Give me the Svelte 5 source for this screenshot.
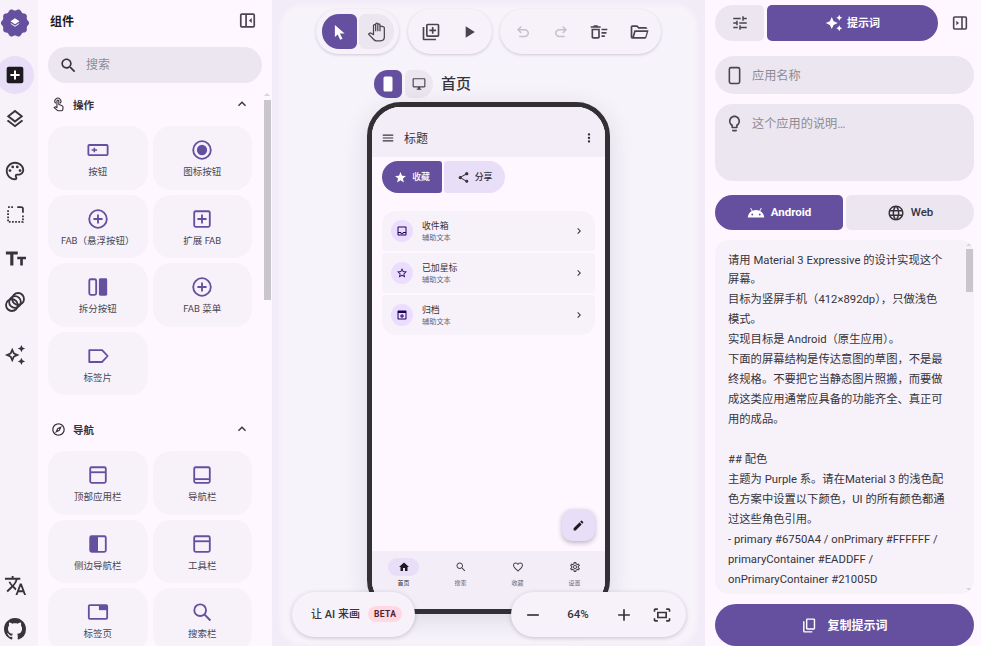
<script>
  // material paths used more than once or too long to keep in the markup
  const P = {
    search: 'M15.5 14h-.79l-.28-.27C15.41 12.59 16 11.11 16 9.5 16 5.91 13.09 3 9.5 3S3 5.91 3 9.5 5.91 16 9.5 16c1.61 0 3.09-.59 4.23-1.57l.27.28v.79l5 4.99L20.49 19l-4.99-5zm-6 0C7.01 14 5 11.99 5 9.5S7.01 5 9.5 5 14 7.01 14 9.5 11.99 14 9.5 14z',
    less: 'M12 8l-6 6 1.41 1.41L12 10.83l4.59 4.58L18 14z',
    chevron: 'M10 6L8.59 7.41 13.17 12l-4.58 4.59L10 18l6-6z',
    layers: 'M11.99 18.54l-7.37-5.73L3 14.07l9 7 9-7-1.63-1.27-7.38 5.74zM12 16l7.36-5.73L21 9l-9-7-9 7 1.63 1.27L12 16zm0-11.47L17.74 9 12 13.47 6.26 9 12 4.53z',
    sparkOutline: 'M19 9l1.25-2.75L23 5l-2.75-1.25L19 1l-1.25 2.75L15 5l2.75 1.25L19 9zm-7.5.5L9 4 6.5 9.5 1 12l5.5 2.5L9 20l2.5-5.5L17 12l-5.5-2.5zM9.99 12.99L9 15.17l-.99-2.18L5.83 12l2.18-.99L9 8.83l.99 2.18 2.18.99-2.18.99zM19 15l-1.25 2.75L15 19l2.75 1.25L19 23l1.25-2.75L23 19l-2.75-1.25L19 15z',
    spark: 'M19 9l1.25-2.75L23 5l-2.75-1.25L19 1l-1.25 2.75L15 5l2.75 1.25zM19 15l-1.25 2.75L15 19l2.75 1.25L19 23l1.25-2.75L23 19l-2.75-1.25zM11.5 9.5L9 4 6.5 9.5 1 12l5.5 2.5L9 20l2.5-5.5L17 12l-5.5-2.5z',
    translate: 'M12.87 15.07l-2.54-2.51.03-.03c1.74-1.94 2.98-4.17 3.71-6.53H17V4h-7V2H8v2H1v1.99h11.17C11.5 7.92 10.44 9.75 9 11.35 8.07 10.32 7.3 9.19 6.69 8h-2c.73 1.63 1.73 3.17 2.98 4.56l-5.09 5.02L4 19l5-5 3.11 3.11.76-2.04zM18.5 10h-2L12 22h2l1.12-3h4.75L21 22h2l-4.5-12zm-2.62 7l1.62-4.33L19.12 17h-3.24z',
    palette: 'M12 22C6.49 22 2 17.51 2 12S6.49 2 12 2s10 4.04 10 9c0 3.31-2.69 6-6 6h-1.77c-.28 0-.5.22-.5.5 0 .12.05.23.13.33.41.47.64 1.06.64 1.67A2.5 2.5 0 0 1 12 22zm0-18c-4.41 0-8 3.59-8 8s3.59 8 8 8c.28 0 .5-.22.5-.5a.54.54 0 0 0-.14-.35c-.41-.46-.63-1.05-.63-1.65a2.5 2.5 0 0 1 2.5-2.5H16c2.21 0 4-1.79 4-4 0-3.86-3.59-7-8-7z',
    undo: 'M7 19v-2h7.1q1.57 0 2.73-1T18 13.5q0-1.5-1.17-2.5T14.1 10H7.8l2.6 2.6L9 14 4 9l5-5 1.4 1.4L7.8 8h6.3q2.43 0 4.16 1.57T20 13.5q0 2.36-1.74 3.93T14.1 19H7z',
    home: 'M10 20v-6h4v6h5v-8h3L12 3 2 12h3v8z',
    heart: 'M16.5 3c-1.74 0-3.41.81-4.5 2.09C10.91 3.81 9.24 3 7.5 3 4.42 3 2 5.42 2 8.5c0 3.78 3.4 6.86 8.55 11.54L12 21.35l1.45-1.32C18.6 15.36 22 12.28 22 8.5 22 5.42 19.58 3 16.5 3zm-4.4 15.55l-.1.1-.1-.1C7.14 14.24 4 11.39 4 8.5 4 6.5 5.5 5 7.5 5c1.54 0 3.04.99 3.57 2.36h1.87C13.46 5.99 14.96 5 16.5 5c2 0 3.5 1.5 3.5 3.5 0 2.89-3.14 5.74-7.9 10.05z',
    gear: 'M19.43 12.98c.04-.32.07-.64.07-.98 0-.34-.03-.66-.07-.98l2.11-1.65c.19-.15.24-.42.12-.64l-2-3.46c-.09-.16-.26-.25-.44-.25-.06 0-.12.01-.17.03l-2.49 1c-.52-.4-1.08-.73-1.69-.98l-.38-2.65C14.46 2.18 14.25 2 14 2h-4c-.25 0-.46.18-.49.42l-.38 2.65c-.61.25-1.17.59-1.69.98l-2.49-1c-.06-.02-.12-.03-.18-.03-.17 0-.34.09-.43.25l-2 3.46c-.13.22-.07.49.12.64l2.11 1.65c-.04.32-.07.65-.07.98 0 .33.03.66.07.98l-2.11 1.65c-.19.15-.24.42-.12.64l2 3.46c.09.16.26.25.44.25.06 0 .12-.01.17-.03l2.49-1c.52.4 1.08.73 1.69.98l.38 2.65c.03.24.24.42.49.42h4c.25 0 .46-.18.49-.42l.38-2.65c.61-.25 1.17-.59 1.69-.98l2.49 1c.06.02.12.03.18.03.17 0 .34-.09.43-.25l2-3.46c.12-.22.07-.49-.12-.64l-2.11-1.65zm-1.98-1.71c.04.31.05.52.05.73 0 .21-.02.43-.05.73l-.14 1.13.89.7 1.08.84-.7 1.21-1.27-.51-1.04-.42-.9.68c-.43.32-.84.56-1.25.73l-1.06.43-.16 1.13-.2 1.35h-1.4l-.19-1.35-.16-1.13-1.06-.43c-.43-.18-.83-.41-1.23-.71l-.91-.7-1.06.43-1.27.51-.7-1.21 1.08-.84.89-.7-.14-1.13c-.03-.31-.05-.54-.05-.74s.02-.43.05-.73l.14-1.13-.89-.7-1.08-.84.7-1.21 1.27.51 1.04.42.9-.68c.43-.32.84-.56 1.25-.73l1.06-.43.16-1.13.2-1.35h1.39l.19 1.35.16 1.13 1.06.43c.43.18.83.41 1.23.71l.91.7 1.06-.43 1.27-.51.7 1.21-1.07.85-.89.7.14 1.13zM12 8c-2.21 0-4 1.79-4 4s1.79 4 4 4 4-1.79 4-4-1.79-4-4-4zm0 6c-1.1 0-2-.9-2-2s.9-2 2-2 2 .9 2 2-.9 2-2 2z',
    inbox: 'M19 3H5c-1.1 0-2 .9-2 2v14c0 1.1.9 2 2 2h14c1.1 0 2-.9 2-2V5c0-1.1-.9-2-2-2zm0 16H5v-3h3.56c.69 1.19 1.97 2 3.45 2s2.75-.81 3.45-2H19v3zm0-5h-4.99c0 1.1-.9 2-2 2s-2-.9-2-2H5V5h14v9z',
    starLine: 'M22 9.24l-7.19-.62L12 2 9.19 8.63 2 9.24l5.46 4.73L5.82 21 12 17.27 18.18 21l-1.63-7.03L22 9.24zM12 15.4l-3.76 2.27 1-4.28-3.32-2.88 4.38-.38L12 6.1l1.71 4.04 4.38.38-3.32 2.88 1 4.28L12 15.4z',
    archive: 'M5 3h14c1.1 0 2 .9 2 2v14c0 1.1-.9 2-2 2H5c-1.1 0-2-.9-2-2V5c0-1.1.9-2 2-2zm0 5v11h14V8H5zm6 2h2v3h3v2h-3v3h-2v-3H8v-2h3z'
  };

  // card glyphs, all on a 24 box, stroke colour comes from .glyph
  const ring = '<circle cx="12" cy="12" r="9.6" fill="none" stroke-width="2"/>';
  const plus = '<path d="M12 7v10M7 12h10" fill="none" stroke-width="2"/>';
  const box = '<rect x="3.5" y="3.5" width="17" height="17" rx="1.6" fill="none" stroke-width="2"/>';
  const G = {
    button: '<rect x="1.5" y="6.5" width="21" height="11" rx="1" fill="none" stroke-width="2"/><path d="M5 12h6M8 9.5v5" fill="none" stroke-width="1.7"/>',
    iconbtn: ring + '<circle cx="12" cy="12" r="5.6" fill="currentColor" stroke="none"/>',
    fab: ring + plus,
    extfab: box + plus,
    split: '<rect x="2.5" y="3.5" width="7.5" height="17" rx="1.6" fill="none" stroke-width="2"/><rect x="13" y="2.5" width="9" height="19" rx="1.6" fill="currentColor" stroke="none"/>',
    chip: '<path d="M2.5 5.5h14l6 6.5-6 6.5h-14z" fill="none" stroke-width="2" stroke-linejoin="round"/>',
    topbar: box + '<path d="M3.5 9h17" fill="none" stroke-width="2"/>',
    navbar: box + '<path d="M3.5 16.5h17" fill="none" stroke-width="2"/>',
    rail: box + '<rect x="3.5" y="3.5" width="8.5" height="17" fill="currentColor" stroke="none"/>',
    tabs: '<rect x="2" y="4.5" width="20" height="15" rx="1.2" fill="none" stroke-width="2"/><rect x="13" y="4.5" width="9" height="5.5" fill="currentColor" stroke="none"/>',
    searchbar: '<circle cx="10" cy="10" r="6.4" fill="none" stroke-width="2"/><path d="M14.6 14.6l6.6 6.6" fill="none" stroke-width="2.2"/>'
  };

  const sections = [
    {
      title: '操作',
      icon: 'touch',
      items: [
        ['按钮', 'button'], ['图标按钮', 'iconbtn'], ['FAB（悬浮按钮）', 'fab'], ['扩展 FAB', 'extfab'],
        ['拆分按钮', 'split'], ['FAB 菜单', 'fab'], ['标签片', 'chip']
      ]
    },
    {
      title: '导航',
      icon: 'explore',
      items: [
        ['顶部应用栏', 'topbar'], ['导航栏', 'navbar'], ['侧边导航栏', 'rail'], ['工具栏', 'topbar'],
        ['标签页', 'tabs'], ['搜索栏', 'searchbar']
      ]
    }
  ];

  const listRows = [
    { title: '收件箱', icon: P.inbox },
    { title: '已加星标', icon: P.starLine },
    { title: '归档', icon: P.archive }
  ];

  const navItems = [
    { label: '首页', icon: P.home, active: true },
    { label: '搜索', icon: P.search },
    { label: '收藏', icon: P.heart },
    { label: '设置', icon: P.gear }
  ];

  // scalloped logo blob
  const blob = Array.from({ length: 120 }, (_, i) => {
    const a = (i / 120) * Math.PI * 2;
    const r = 13.3 + 0.8 * Math.cos(a * 10);
    return `${(15 + r * Math.cos(a)).toFixed(2)},${(15 + r * Math.sin(a)).toFixed(2)}`;
  }).join(' ');

  const promptText = `请用 Material 3 Expressive 的设计实现这个屏幕。
目标为竖屏手机（412×892dp），只做浅色模式。
实现目标是 Android（原生应用）。
下面的屏幕结构是传达意图的草图，不是最终规格。不要把它当静态图片照搬，而要做成这类应用通常应具备的功能齐全、真正可用的成品。

## 配色
主题为 Purple 系。请在Material 3 的浅色配色方案中设置以下颜色，UI 的所有颜色都通过这些角色引用。
- primary #6750A4 / onPrimary #FFFFFF / primaryContainer #EADDFF / onPrimaryContainer #21005D`;
</script>

{#snippet icon(d, size = 20, cls = '')}
  <svg class={cls} width={size} height={size} viewBox="0 0 24 24" fill="currentColor" aria-hidden="true"><path {d} /></svg>
{/snippet}

<div class="app">
  <nav class="rail">
    <svg class="logo" width="30" height="30" viewBox="0 0 30 30">
      <polygon points={blob} fill="#65509f" />
      <path d="M15 10.200l4.500 3-4.500 3-4.500-3zM11.200 15.200l3.800 2.500 3.800-2.500.7.6-4.500 3-4.500-3z" fill="#fff" />
    </svg>
    <div class="rail-active">
      <svg width="20" height="20" viewBox="0 0 24 24">
        <rect x="2" y="2" width="20" height="20" rx="2.5" fill="#1d1b20" />
        <path d="M12 6.5v11M6.5 12h11" stroke="#fff" stroke-width="2.4" />
      </svg>
    </div>
    <div class="rail-item first">{@render icon(P.layers, 22)}</div>
    <div class="rail-item palette">
      <svg width="22" height="22" viewBox="0 0 24 24" fill="currentColor">
        <path d={P.palette} />
        <circle cx="6.5" cy="11.5" r="1.5" /><circle cx="9.5" cy="7.5" r="1.5" /><circle cx="14.5" cy="7.5" r="1.5" /><circle cx="17.5" cy="11.5" r="1.5" />
      </svg>
    </div>
    <div class="rail-item dashed">
      <svg width="21" height="21" viewBox="0 0 24 24" fill="none" stroke="currentColor" stroke-width="2">
        <path d="M14 3.500h4.500a2 2 0 0 1 2 2V10" />
        <path d="M3.500 3.500h7M3.500 7v13.500h17V13" stroke-dasharray="2 1.600" />
      </svg>
    </div>
    <div class="rail-item">{@render icon('M1 4v3.400h5V20h3.600V7.400h5V4zM14 10v2.800h3.400V20h3v-7.200H24V10z', 21)}</div>
    <div class="rail-item">
      <svg width="22" height="22" viewBox="0 0 24 24" fill="none" stroke="currentColor" stroke-width="2">
        <circle cx="8.600" cy="15.400" r="6.400" /><circle cx="12" cy="12" r="6.400" /><circle cx="15.400" cy="8.600" r="6.400" />
      </svg>
    </div>
    <div class="rail-item spark">{@render icon(P.sparkOutline, 22)}</div>
    <div class="rail-foot">
      {@render icon(P.translate, 23)}
      <svg class="gh" width="22" height="22" viewBox="0 0 16 16" fill="currentColor"><path d="M8 0C3.58 0 0 3.58 0 8c0 3.54 2.29 6.53 5.47 7.59.4.07.55-.17.55-.38 0-.19-.01-.82-.01-1.49-2.01.37-2.53-.49-2.69-.94-.09-.23-.48-.94-.82-1.13-.28-.15-.68-.52-.01-.53.63-.01 1.08.58 1.23.82.72 1.21 1.87.87 2.33.66.07-.52.28-.87.51-1.07-1.78-.2-3.64-.89-3.64-3.95 0-.87.31-1.59.82-2.15-.08-.2-.36-1.02.08-2.12 0 0 .67-.21 2.2.82.64-.18 1.32-.27 2-.27.68 0 1.36.09 2 .27 1.53-1.04 2.2-.82 2.2-.82.44 1.1.16 1.92.08 2.12.51.56.82 1.27.82 2.15 0 3.07-1.87 3.75-3.65 3.95.29.25.54.73.54 1.48 0 1.07-.01 1.93-.01 2.2 0 .21.15.46.55.38A8.013 8.013 0 0016 8c0-4.42-3.58-8-8-8z" /></svg>
    </div>
  </nav>

  <aside class="panel">
    <header class="panel-head">
      <h2>组件</h2>
      <svg width="17" height="17" viewBox="0 0 24 24" fill="none" stroke="#49454f" stroke-width="2.4">
        <rect x="2.5" y="3" width="19" height="18" rx="1.5" /><path d="M10 3v18" />
        <path d="M18 8.5v7L14 12z" fill="#49454f" stroke="none" />
      </svg>
    </header>
    <div class="search">
      {@render icon(P.search, 19)}
      <span>搜索</span>
    </div>
    <div class="list">
      {#each sections as s}
        <section>
          <div class="sec-head">
            {#if s.icon === 'touch'}
              <svg width="15" height="15" viewBox="0 0 24 24" fill="none" stroke="currentColor" stroke-width="1.800" stroke-linejoin="round">
                <path d="M9.500 17V6.500a1.500 1.500 0 0 1 3 0V12l4.500 1.500c1.500.5 2.500 1.500 2.300 3l-.6 4c-.2 1-1 1.500-2 1.500h-5c-.8 0-1.400-.3-2-.9L5 17l.8-.8c.5-.5 1.200-.6 1.800-.3z" />
                <path d="M7.500 10a4.800 4.800 0 1 1 7 0" />
              </svg>
            {:else}
              {@render icon('M12 2C6.48 2 2 6.48 2 12s4.48 10 10 10 10-4.48 10-10S17.520 2 12 2zm0 18c-4.410 0-8-3.590-8-8s3.590-8 8-8 8 3.590 8 8-3.590 8-8 8zm-5.500-2.500l7.510-3.490L17.500 6.500 9.990 9.990 6.500 17.500zm5.500-6.600c.61 0 1.100.49 1.100 1.100s-.49 1.100-1.100 1.100-1.100-.49-1.100-1.100.49-1.100 1.100-1.100z', 15)}
            {/if}
            <span>{s.title}</span>
            {@render icon(P.less, 16, 'sec-toggle')}
          </div>
          <div class="cards">
            {#each s.items as [label, g]}
              <div class="card">
                <svg class="glyph" width="22" height="22" viewBox="0 0 24 24" stroke="currentColor">{@html G[g]}</svg>
                <span>{label}</span>
              </div>
            {/each}
          </div>
        </section>
      {/each}
    </div>
    <div class="scroll-up"></div>
    <div class="thumb"></div>
  </aside>

  <main class="canvas">
    <div class="toolbar">
      <div class="tool-group">
        <div class="seg on">
          <svg width="18" height="18" viewBox="0 0 24 24" fill="#fff"><path d="M6.500 2.500l13 11.500h-6.300l3.400 7-3 1.400-3.300-7.200-3.800 3.600z" /></svg>
        </div>
        <div class="seg off">
          <svg width="20" height="20" viewBox="0 0 24 24" fill="none" stroke="#49454f" stroke-width="1.500" stroke-linejoin="round"><path d="M22 6.500V18c0 2.800-2 4.500-4.500 4.500h-5.200c-1 0-2-.4-2.700-1.200L3 14.600l1.200-1.100c.4-.4 1-.4 1.500-.2L9 15.200V4.500c0-.8.6-1.400 1.300-1.400s1.300.6 1.300 1.400V11m0 0V2.600c0-.8.6-1.400 1.300-1.400s1.300.6 1.300 1.400V11m0 0V3.600c0-.8.6-1.400 1.300-1.400s1.300.6 1.300 1.400V11m0 0V6.400c0-.8.6-1.400 1.300-1.400S22 5.700 22 6.500" /></svg>
        </div>
      </div>
      <div class="tool-group wide">
        {@render icon('M4 6H2v14c0 1.1.9 2 2 2h14v-2H4V6zm16-4H8c-1.1 0-2 .9-2 2v12c0 1.100.9 2 2 2h12c1.100 0 2-.9 2-2V4c0-1.100-.9-2-2-2zm0 14H8V4h12v12zm-7-2h2v-3h3V9h-3V6h-2v3h-3v2h3z', 20)}
        {@render icon('M8 5v14l11-7z', 20)}
      </div>
      <div class="tool-group tail">
        {@render icon(P.undo, 18, 'dim')}
        {@render icon(P.undo, 18, 'dim flip')}
        {@render icon('M15 16h4v2h-4zm0-8h7v2h-7zm0 4h6v2h-6zM3 18c0 1.100.9 2 2 2h6c1.100 0 2-.9 2-2V8H3v10zm2-8h6v8H5v-8zm5-6H6L5 5H2v2h12V5h-3z', 20)}
        {@render icon('M4 20q-.82 0-1.41-.59T2 18V6q0-.82.59-1.41T4 4h6l2 2h8q.82 0 1.41.59T22 8H11.17l-2-2H4v12l2.4-8h17.1l-2.58 8.6q-.2.65-.74 1.03T19.5 20H4zm2.1-2h13.4l1.8-6H7.9l-1.8 6z', 20)}
      </div>
    </div>

    <div class="device-row">
      <div class="dev on">
        <svg width="14" height="16" viewBox="0 0 14 16" fill="#fff"><rect x="2.500" y="0.500" width="9" height="15" rx="1.500" /></svg>
      </div>
      <div class="dev off">
        {@render icon('M21 2H3c-1.100 0-2 .9-2 2v12c0 1.100.9 2 2 2h7v2H8v2h8v-2h-2v-2h7c1.100 0 2-.9 2-2V4c0-1.100-.9-2-2-2zm0 14H3V4h18v12z', 14)}
      </div>
      <h1>首页</h1>
    </div>

    <div class="phone">
      <div class="screen">
        <div class="appbar">
          {@render icon('M3 18h18v-2H3v2zm0-5h18v-2H3v2zm0-7v2h18V6H3z', 14)}
          <span>标题</span>
          {@render icon('M12 8c1.100 0 2-.9 2-2s-.9-2-2-2-2 .9-2 2 .9 2 2 2zm0 2c-1.100 0-2 .9-2 2s.9 2 2 2 2-.9 2-2-.9-2-2-2zm0 6c-1.100 0-2 .9-2 2s.9 2 2 2 2-.9 2-2-.9-2-2-2z', 14, 'appbar-more')}
        </div>
        <div class="btn-group">
          <div class="gbtn first">
            {@render icon('M12 17.270L18.180 21l-1.640-7.030L22 9.240l-7.190-.61L12 2 9.190 8.630 2 9.240l5.460 4.730L5.820 21z', 13)}
            <span>收藏</span>
          </div>
          <div class="gbtn second">
            {@render icon('M18 16.080c-.76 0-1.440.3-1.960.77L8.910 12.700c.05-.23.090-.46.090-.7s-.04-.47-.09-.7l7.050-4.110c.54.5 1.250.81 2.040.81 1.660 0 3-1.340 3-3s-1.340-3-3-3-3 1.340-3 3c0 .24.040.47.090.7L8.040 9.810C7.500 9.310 6.790 9 6 9c-1.660 0-3 1.340-3 3s1.340 3 3 3c.79 0 1.500-.31 2.040-.81l7.120 4.160c-.05.21-.08.43-.08.65 0 1.610 1.310 2.920 2.920 2.920s2.920-1.310 2.920-2.920-1.310-2.920-2.920-2.920z', 13)}
            <span>分享</span>
          </div>
        </div>
        <div class="rows">
          {#each listRows as r}
            <div class="row">
              <div class="avatar">{@render icon(r.icon, 12)}</div>
              <div class="row-text">
                <span class="row-title">{r.title}</span>
                <span class="row-sub">辅助文本</span>
              </div>
              {@render icon(P.chevron, 12, 'row-go')}
            </div>
          {/each}
        </div>
        <div class="fab">
          {@render icon('M3 17.250V21h3.750L17.810 9.940l-3.750-3.750L3 17.250zM20.710 7.040c.39-.39.39-1.020 0-1.410l-2.340-2.340c-.39-.39-1.020-.39-1.410 0l-1.830 1.830 3.750 3.750 1.830-1.830z', 13)}
        </div>
        <div class="bottom-nav">
          {#each navItems as n}
            <div class="nav-item" class:active={n.active}>
              <div class="nav-pill">{@render icon(n.icon, 12)}</div>
              <span>{n.label}</span>
            </div>
          {/each}
        </div>
      </div>
    </div>

    <div class="float ai">
      <span>让 AI 来画</span>
      <em>BETA</em>
    </div>
    <div class="float zoom">
      {@render icon('M19 13H5v-2h14v2z', 20)}
      <span class="pct">64%</span>
      {@render icon('M19 13h-6v6h-2v-6H5v-2h6V5h2v6h6v2z', 20)}
      <span class="fit">{@render icon('M17 4h3c1.100 0 2 .9 2 2v2h-2V6h-3V4zM4 8V6h3V4H4c-1.100 0-2 .9-2 2v2h2zm16 8v2h-3v2h3c1.100 0 2-.9 2-2v-2h-2zM7 18H4v-2H2v2c0 1.100.9 2 2 2h3v-2zM18 8H6v8h12V8zm-2 6H8v-4h8v4z', 20)}</span>
    </div>
  </main>

  <aside class="side">
    <div class="tabs">
      <div class="tab plain">{@render icon('M3 17v2h6v-2H3zM3 5v2h10V5H3zm10 16v-2h8v-2h-8v-2h-2v6h2zM7 9v2H3v2h4v2h2V9H7zm14 4v-2H11v2h10zm-6-4h2V7h4V5h-4V3h-2v6z', 18)}</div>
      <div class="tab main">{@render icon(P.spark, 18)}<span>提示词</span></div>
      <svg class="side-toggle" width="16" height="16" viewBox="0 0 24 24" fill="none" stroke="#49454f" stroke-width="2.400">
        <rect x="2.500" y="3" width="19" height="18" rx="1.500" /><path d="M15 3v18" />
        <path d="M6.500 8.500v7l4-3.500z" fill="#49454f" stroke="none" />
      </svg>
    </div>

    <div class="field">
      <svg width="19" height="19" viewBox="0 0 24 24" fill="none" stroke="#49454f" stroke-width="2"><rect x="5.500" y="2" width="13" height="20" rx="2" /></svg>
      <span>应用名称</span>
    </div>
    <div class="field area">
      {@render icon('M9 21c0 .55.45 1 1 1h4c.55 0 1-.45 1-1v-1H9v1zm3-19C8.140 2 5 5.140 5 9c0 2.380 1.190 4.470 3 5.740V17c0 .55.45 1 1 1h6c.55 0 1-.45 1-1v-2.260c1.810-1.270 3-3.360 3-5.740 0-3.860-3.140-7-7-7zm2.850 11.100l-.85.6V16h-4v-2.300l-.85-.6C7.800 12.160 7 10.630 7 9c0-2.760 2.240-5 5-5s5 2.240 5 5c0 1.630-.8 3.160-2.150 4.100z', 19)}
      <span>这个应用的说明…</span>
    </div>

    <div class="platform">
      <div class="pf on">
        {@render icon('M17.600 9.480l1.840-3.180c.16-.31.040-.69-.26-.85a.637.637 0 0 0-.83.22l-1.880 3.240a11.463 11.463 0 0 0-8.940 0L5.650 5.670a.643.643 0 0 0-.87-.2c-.28.18-.37.54-.22.83L6.400 9.480A10.780 10.780 0 0 0 1 18h22a10.780 10.780 0 0 0-5.400-8.520zM7 15.250a1.250 1.250 0 1 1 0-2.500 1.250 1.250 0 0 1 0 2.500zm10 0a1.250 1.250 0 1 1 0-2.500 1.250 1.250 0 0 1 0 2.500z', 18)}
        <span>Android</span>
      </div>
      <div class="pf off">
        {@render icon('M11.990 2C6.470 2 2 6.480 2 12s4.470 10 9.990 10C17.520 22 22 17.520 22 12S17.520 2 11.990 2zm6.930 6h-2.950c-.32-1.250-.78-2.450-1.380-3.560 1.840.63 3.370 1.910 4.330 3.560zM12 4.040c.83 1.200 1.480 2.530 1.910 3.960h-3.820c.43-1.430 1.080-2.760 1.910-3.960zM4.260 14C4.100 13.360 4 12.690 4 12s.1-1.360.26-2h3.380c-.08.66-.14 1.320-.14 2 0 .68.06 1.340.14 2H4.260zm.82 2h2.950c.32 1.250.78 2.450 1.380 3.560-1.840-.63-3.370-1.900-4.330-3.560zm2.950-8H5.080c.96-1.660 2.490-2.930 4.330-3.560C8.810 5.550 8.350 6.750 8.030 8zM12 19.960c-.83-1.200-1.480-2.530-1.910-3.960h3.820c-.43 1.430-1.080 2.760-1.910 3.960zM14.340 14H9.660c-.09-.66-.16-1.320-.16-2 0-.68.07-1.350.16-2h4.680c.09.65.16 1.320.16 2 0 .68-.07 1.340-.16 2zm.25 5.560c.6-1.110 1.060-2.310 1.380-3.560h2.950c-.96 1.650-2.490 2.930-4.330 3.560zM16.360 14c.08-.66.14-1.320.14-2 0-.68-.06-1.340-.14-2h3.380c.16.64.26 1.310.26 2s-.1 1.360-.26 2h-3.380z', 18)}
        <span>Web</span>
      </div>
    </div>

    <div class="prompt">
      <p>{promptText}</p>
      <div class="arrow up"></div>
      <div class="prompt-thumb"></div>
      <div class="arrow down"></div>
    </div>

    <div class="copy">
      {@render icon('M9 18q-.82 0-1.410-.59T7 16V4q0-.82.59-1.410T9 2h9q.82 0 1.410.59T20 4v12q0 .82-.59 1.410T18 18H9zm0-2h9V4H9v12zm-4 6q-.82 0-1.410-.59T3 20V6h2v14h11v2H5z', 17)}
      <span>复制提示词</span>
    </div>
  </aside>
</div>

<style>
  :global(body) {
    margin: 0;
    background: #fef7ff;
  }

  .app {
    display: grid;
    grid-template-columns: 38px 234px 433px 276px;
    width: 981px;
    height: 646px;
    overflow: hidden;
    color: #1d1b20;
    font-family: Roboto, 'Noto Sans CJK SC', sans-serif;
  }

  svg {
    display: block;
    flex: none;
  }

  /* rail */
  .rail {
    display: flex;
    flex-direction: column;
    align-items: center;
    background: #f7f2fa;
    position: relative;
    overflow: hidden;
    color: #36333b;
    padding-right: 8px;
    box-sizing: border-box;
  }
  .logo {
    margin: 8px 0 18px 0;
  }
  .rail-active {
    width: 38px;
    height: 38px;
    flex: none;
    border-radius: 50%;
    background: #e8def8;
    display: flex;
    align-items: center;
    justify-content: center;
  }
  .rail-item {
    height: 22px;
    margin-top: 22px;
    display: flex;
    align-items: center;
  }
  .rail-item.first {
    margin-top: 14px;
  }
  .rail-item.palette {
    margin-top: 30px;
  }
  .rail-item.dashed {
    margin-top: 21px;
  }
  .rail-item.spark {
    margin-top: 31px;
  }
  .rail-foot {
    margin-top: auto;
    display: flex;
    flex-direction: column;
    align-items: center;
    gap: 21px;
    padding-bottom: 6px;
  }

  /* component panel */
  .panel {
    position: relative;
    display: flex;
    flex-direction: column;
    padding: 0 10px;
    overflow: hidden;
    height: 646px;
    box-sizing: border-box;
  }
  .panel-head {
    display: flex;
    justify-content: space-between;
    align-items: center;
    height: 40px;
    padding: 0 6px 0 2px;
    flex: none;
  }
  .panel-head h2 {
    margin: 0;
    font-size: 12px;
    font-weight: 700;
  }
  .search {
    display: flex;
    align-items: center;
    gap: 8px;
    height: 36px;
    width: 214px;
    margin-top: 7px;
    padding-left: 11px;
    box-sizing: border-box;
    flex: none;
    border-radius: 18px;
    background: #ece6f0;
    color: #36333b;
  }
  .search span {
    font-size: 12px;
    line-height: 14px;
    margin-top: -1px;
    color: #8f8b95;
  }
  .list {
    width: 204px;
    margin-top: 9px;
  }
  section {
    margin-bottom: 22px;
  }
  .sec-head {
    display: flex;
    align-items: center;
    gap: 7px;
    height: 24px;
    padding: 0 2px 0 3px;
    font-size: 10.500px;
    font-weight: 600;
    color: #36333b;
    margin-bottom: 10px;
  }
  .sec-head :global(.sec-toggle) {
    margin-left: auto;
  }
  .cards {
    display: grid;
    grid-template-columns: 1fr 1fr;
    grid-auto-rows: 63.500px;
    gap: 5px;
  }
  .card {
    display: flex;
    flex-direction: column;
    align-items: center;
    gap: 3px;
    padding-top: 13px;
    box-sizing: border-box;
    background: #f7f2fa;
    border-radius: 18px;
    font-size: 9.500px;
    color: #49454f;
  }
  .glyph {
    color: #65509f;
  }
  .scroll-up {
    position: absolute;
    left: 226px;
    top: 93px;
    width: 0;
    height: 0;
    border-left: 3px solid transparent;
    border-right: 3px solid transparent;
    border-bottom: 3px solid #d9d5dc;
  }
  .thumb {
    position: absolute;
    left: 226px;
    top: 100px;
    width: 7px;
    height: 200px;
    background: #c9c5cd;
  }

  /* canvas: darker frame, softly edged lighter sheet on top */
  .canvas {
    position: relative;
    background: #f2ecf8;
    display: flex;
    flex-direction: column;
    height: 646px;
    overflow: hidden;
  }
  .canvas::before {
    content: '';
    position: absolute;
    inset: 5px 8px 1px;
    background: #f7f3fa;
    border-radius: 22px;
    filter: blur(2px);
  }
  .canvas > * {
    position: relative;
  }
  .toolbar {
    display: flex;
    gap: 8.500px;
    margin: 9px 0 0 44px;
    flex: none;
  }
  .tool-group {
    display: flex;
    align-items: center;
    justify-content: center;
    width: 83px;
    height: 45px;
    box-sizing: border-box;
    background: #f7f2fa;
    border-radius: 23px;
    box-shadow: 0 1px 3px rgba(60, 50, 80, 0.22);
    color: #49454f;
    gap: 2px;
  }
  .tool-group.wide {
    width: 84px;
    padding: 0 13px;
    justify-content: space-between;
  }
  .tool-group.tail {
    width: 161px;
    padding: 0 12px 0 14px;
    justify-content: space-between;
  }
  .tool-group :global(.dim) {
    color: #c5c1cb;
  }
  .tool-group :global(.flip) {
    transform: scaleX(-1);
  }
  .seg {
    width: 35px;
    height: 35px;
    display: flex;
    align-items: center;
    justify-content: center;
  }
  .seg.on {
    background: #65509f;
    border-radius: 17px 6px 6px 17px;
  }
  .seg.off {
    background: #ece6f0;
    border-radius: 6px 17px 17px 6px;
  }
  .device-row {
    display: flex;
    align-items: center;
    gap: 3px;
    margin: 16px 0 0 102px;
    height: 28px;
    flex: none;
  }
  .device-row h1 {
    margin: -3px 0 0 5px;
    font-size: 15px;
    font-weight: 500;
    color: #36333b;
  }
  .dev {
    width: 28px;
    height: 28px;
    display: flex;
    align-items: center;
    justify-content: center;
  }
  .dev.on {
    background: #65509f;
    border-radius: 14px 6px 6px 14px;
  }
  .dev.off {
    background: #ece6f0;
    color: #49454f;
    border-radius: 6px 14px 14px 6px;
  }

  /* phone mock */
  .phone {
    margin: 4px 0 0 95px;
    width: 243px;
    height: 512px;
    box-sizing: border-box;
    flex: none;
    border: 5.500px solid #322f35;
    border-radius: 34px;
    background: #fef7ff;
    overflow: hidden;
    box-shadow: 0 6px 24px rgba(50, 40, 70, 0.13);
  }
  .screen {
    position: relative;
    height: 100%;
    display: flex;
    flex-direction: column;
    background: #fef7ff;
  }
  .appbar {
    height: 50px;
    flex: none;
    box-sizing: border-box;
    padding: 11px 9px 0 9px;
    display: flex;
    align-items: center;
    gap: 9px;
    background: #f3edf7;
    font-size: 12px;
    color: #36333b;
  }
  .appbar :global(.appbar-more) {
    margin-left: auto;
  }
  .btn-group {
    display: flex;
    gap: 2px;
    margin: 4px 0 0 10px;
    height: 32px;
    flex: none;
  }
  .gbtn {
    display: flex;
    align-items: center;
    justify-content: center;
    gap: 5px;
    font-size: 8.900px;
    font-weight: 500;
  }
  .gbtn span {
    margin-top: -2px;
  }
  .gbtn.first {
    width: 60px;
    background: #65509f;
    color: #fff;
    border-radius: 16px 3px 3px 16px;
  }
  .gbtn.second {
    width: 61px;
    background: #e8def8;
    color: #36333b;
    border-radius: 3px 16px 16px 3px;
  }
  .rows {
    display: flex;
    flex-direction: column;
    gap: 2px;
    margin: 18px 10px 0;
    width: 213px;
  }
  .row {
    display: flex;
    align-items: center;
    height: 40px;
    padding: 0 10px 0 9px;
    background: #f7f2fa;
    border-radius: 4px;
    color: #36333b;
  }
  .row:first-child {
    border-radius: 14px 14px 4px 4px;
  }
  .row:last-child {
    border-radius: 4px 4px 14px 14px;
  }
  .avatar {
    width: 22px;
    height: 22px;
    border-radius: 50%;
    background: #eaddff;
    color: #21005d;
    display: flex;
    align-items: center;
    justify-content: center;
    margin-right: 9px;
  }
  .row-text {
    display: flex;
    flex-direction: column;
    line-height: 11.500px;
    padding-top: 2px;
  }
  .row-title {
    font-size: 8.900px;
  }
  .row-sub {
    font-size: 7.200px;
    color: #6a6670;
  }
  .row :global(.row-go) {
    margin-left: auto;
  }
  .fab {
    position: absolute;
    left: 190px;
    top: 402px;
    width: 33px;
    height: 32px;
    border-radius: 10px;
    background: #e8def8;
    display: flex;
    align-items: center;
    justify-content: center;
    box-shadow: 0 2px 5px rgba(40, 30, 60, 0.3);
  }
  .bottom-nav {
    margin-top: auto;
    height: 58.500px;
    flex: none;
    background: #f3edf7;
    display: grid;
    grid-template-columns: repeat(4, 1fr);
    padding: 7px 2px 0 3px;
    box-sizing: border-box;
  }
  .nav-item {
    display: flex;
    flex-direction: column;
    align-items: center;
    gap: 2px;
    font-size: 6px;
    color: #6a6670;
  }
  .nav-pill {
    width: 31px;
    height: 18px;
    border-radius: 9px;
    display: flex;
    align-items: center;
    justify-content: center;
    color: #49454f;
  }
  .nav-item.active {
    color: #36333b;
  }
  .nav-item.active .nav-pill {
    background: #e8def8;
    color: #1d1b20;
  }

  /* floating pills */
  .canvas > .float {
    position: absolute;
    top: 592px;
    height: 45px;
    box-sizing: border-box;
    display: flex;
    align-items: center;
    background: #f7f2fa;
    border-radius: 23px;
    box-shadow: 0 1px 4px rgba(60, 50, 80, 0.25);
    color: #36333b;
  }
  .ai {
    left: 20px;
    width: 123px;
    padding-left: 19px;
    gap: 8px;
    font-size: 11px;
    font-weight: 500;
  }
  .ai span {
    margin-top: -3px;
  }
  .ai em {
    font-style: normal;
    font-size: 8.500px;
    font-weight: 700;
    letter-spacing: 0.4px;
    padding: 2px 6px;
    line-height: 12px;
    border-radius: 8px;
    background: #ffd8e4;
    color: #4a2532;
    margin-top: -2px;
  }
  .zoom {
    left: 239px;
    width: 175px;
    padding-left: 12px;
    font-size: 11.500px;
    font-weight: 500;
  }
  .pct {
    width: 24px;
    margin: -1px 24px 0 23px;
    text-align: center;
  }
  .fit {
    margin-left: 18px;
  }

  /* right column */
  .side {
    display: flex;
    flex-direction: column;
    padding: 5px 7px 0 10px;
    height: 646px;
    box-sizing: border-box;
    overflow: hidden;
  }
  .tabs {
    display: flex;
    align-items: center;
    gap: 3px;
    height: 36px;
    flex: none;
  }
  .tab {
    height: 36px;
    display: flex;
    align-items: center;
    justify-content: center;
  }
  .tab.plain {
    width: 49px;
    background: #ece6f0;
    color: #49454f;
    border-radius: 18px 5px 5px 18px;
  }
  .tab.main {
    width: 171px;
    gap: 4px;
    background: #65509f;
    color: #fff;
    border-radius: 5px 18px 18px 5px;
    font-size: 11px;
    font-weight: 600;
  }
  .tab.main span {
    margin-top: -3px;
  }
  .side-toggle {
    margin-left: 11px;
  }
  .field {
    display: flex;
    align-items: center;
    gap: 8px;
    height: 38px;
    margin-top: 15px;
    padding-left: 10px;
    box-sizing: border-box;
    flex: none;
    background: #ece6f0;
    border-radius: 19px;
    color: #49454f;
    font-size: 12.200px;
  }
  .field span {
    color: #8f8b95;
  }
  .field.area {
    height: 77px;
    margin-top: 10px;
    border-radius: 18px;
    align-items: flex-start;
    padding-top: 10px;
  }
  .platform {
    display: flex;
    gap: 3px;
    height: 35px;
    margin-top: 14px;
    flex: none;
  }
  .pf {
    flex: 1;
    display: flex;
    align-items: center;
    justify-content: center;
    gap: 6px;
    font-size: 11.500px;
    font-weight: 500;
  }
  .pf span {
    margin-top: -2px;
  }
  .pf.on {
    background: #65509f;
    color: #fff;
    border-radius: 18px 5px 5px 18px;
    font-weight: 700;
  }
  .pf.off {
    background: #ece6f0;
    color: #36333b;
    border-radius: 5px 18px 18px 5px;
  }
  .prompt {
    position: relative;
    height: 354px;
    margin-top: 10px;
    flex: none;
    box-sizing: border-box;
    padding: 10.500px 27px 0 13px;
    background: #f7f2fa;
    border-radius: 14px;
    overflow: hidden;
  }
  .prompt p {
    margin: 0;
    white-space: pre-wrap;
    font-size: 11.300px;
    line-height: 19.950px;
    color: #36333b;
  }
  .prompt-thumb {
    position: absolute;
    right: 1px;
    top: 9px;
    width: 7px;
    height: 43px;
    background: #c9c5cd;
  }
  .arrow {
    position: absolute;
    right: 2px;
    width: 0;
    height: 0;
    border-left: 3px solid transparent;
    border-right: 3px solid transparent;
  }
  .arrow.up {
    top: 3px;
    border-bottom: 3px solid #d9d5dc;
  }
  .arrow.down {
    bottom: 3px;
    border-top: 3px solid #d9d5dc;
  }
  .copy {
    display: flex;
    align-items: center;
    justify-content: center;
    gap: 9px;
    height: 42px;
    margin-top: 10px;
    flex: none;
    background: #65509f;
    color: #fff;
    border-radius: 21px;
    font-size: 12px;
    font-weight: 700;
  }
  .copy span {
    margin-top: -2px;
  }
</style>
